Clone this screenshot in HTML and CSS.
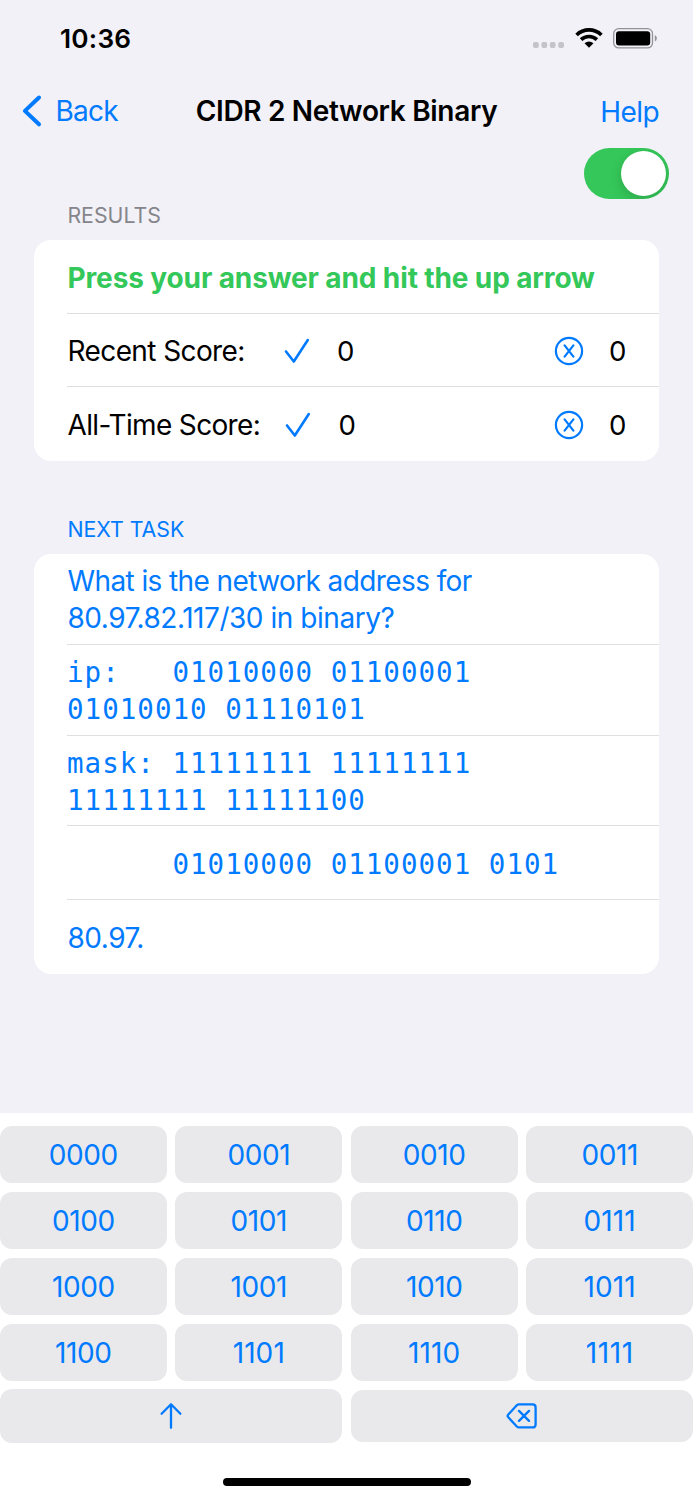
FILE: index.html
```html
<!DOCTYPE html>
<html lang="en">
<head>
<meta charset="utf-8">
<title>CIDR 2 Network Binary</title>
<link rel="stylesheet" href="styles.css">
</head>
<body>
<div class="screen">
  <div class="status">
    <span class="time">10:36</span>
    <div class="indicators">
      <svg class="dots" viewBox="0 0 32 6"><rect x="0" width="5.8" height="6" rx="2"/><rect x="8.4" width="5.8" height="6" rx="2"/><rect x="16.8" width="5.8" height="6" rx="2"/><rect x="25.2" width="5.8" height="6" rx="2"/></svg>
      <svg class="wifi" viewBox="0 0 28 20"><path d="M1.6 7A17.8 17.8 0 0 1 26.4 7M6.1 11.7A11.4 11.4 0 0 1 21.9 11.7" fill="none" stroke="#000" stroke-width="3.7"/><path d="M9.5 15.2Q14 11.6 18.5 15.2L14 19.8Z"/></svg>
      <svg class="battery" viewBox="0 0 45 21"><rect x=".7" y=".7" width="38.8" height="19.2" rx="5" fill="none" stroke="#939397" stroke-width="1.3"/><rect x="3" y="3.2" width="34.2" height="14.2" rx="3"/><path d="M41.8 7Q43.8 8 43.8 10.2T41.8 13.5Z" fill="#939397"/></svg>
    </div>
  </div>
  <header class="nav">
    <a class="back"><svg class="chevron" viewBox="0 0 20 34"><path d="M17 3.5L2.9 16.9L17 30.3"/></svg><span>Back</span></a>
    <h1>CIDR 2 Network Binary</h1>
    <a class="help">Help</a>
  </header>
  <div class="switch-row"><div class="switch"><div class="knob"></div></div></div>
  <h2 class="section results">RESULTS</h2>
  <section class="card">
    <div class="row prompt">Press your answer and hit the up arrow</div>
    <div class="row score">
      <span class="label recent">Recent Score:</span>
      <svg class="check" viewBox="0 0 26 26"><path d="M2 13.5L9.8 23.5L23.8 2"/></svg>
      <span class="count">0</span>
      <svg class="cross" viewBox="0 0 30 30"><circle cx="15" cy="15" r="13.1"/><path d="M10.6 9.4L19.4 20.6M19.4 9.4L10.6 20.6"/></svg>
      <span class="count">0</span>
    </div>
    <div class="row score">
      <span class="label all-time">All-Time Score:</span>
      <svg class="check" viewBox="0 0 26 26"><path d="M2 13.5L9.8 23.5L23.8 2"/></svg>
      <span class="count">0</span>
      <svg class="cross" viewBox="0 0 30 30"><circle cx="15" cy="15" r="13.1"/><path d="M10.6 9.4L19.4 20.6M19.4 9.4L10.6 20.6"/></svg>
      <span class="count">0</span>
    </div>
  </section>
  <h2 class="section next">NEXT TASK</h2>
  <section class="card task">
    <div class="row two question"><span>What is the network address for</span><span class="cidr">80.97.82.117/30 in binary?</span></div>
    <div class="row two mono"><span>ip:   01010000 01100001</span><span>01010010 01110101</span></div>
    <div class="row two mono"><span>mask: 11111111 11111111</span><span>11111111 11111100</span></div>
    <div class="row mono"><span>      01010000 01100001 0101</span></div>
    <div class="row answer"><span>80.97.</span></div>
  </section>
  <div class="keyboard">
    <div class="keys">
      <button>0000</button><button>0001</button><button>0010</button><button>0011</button>
      <button>0100</button><button>0101</button><button>0110</button><button class="wide">0111</button>
      <button>1000</button><button>1001</button><button>1010</button><button class="wide">1011</button>
      <button>1100</button><button class="wide">1101</button><button class="wide">1110</button><button class="wider">1111</button>
    </div>
    <div class="actions">
      <button class="submit" aria-label="Submit"><svg viewBox="0 0 24 28"><path d="M12 25.8V2.3M2.6 11.8L12 2.2L21.4 11.8"/></svg></button>
      <button class="delete" aria-label="Delete"><svg viewBox="0 0 32 28"><path d="M12.8 2.4H26.6Q29.6 2.4 29.6 5.4V22.4Q29.6 25.4 26.6 25.4H12.8Q11.8 25.4 10.8 24.5L2.3 15.3Q1 13.9 2.3 12.5L10.8 3.3Q11.8 2.4 12.8 2.4ZM13 8.9L23 18.9M23 8.9L13 18.9"/></svg></button>
    </div>
    <div class="home"></div>
  </div>
</div>
</body>
</html>
```
FILE: styles.css
```css
* { box-sizing: border-box; }
body { margin: 0; background: #f2f1f7; font-family: Inter, "Liberation Sans", sans-serif; font-size: 28px; color: #000; }
.screen { height: 1500px; width: 693px; display: flex; flex-direction: column; overflow: hidden; }
svg { display: block; flex: none; }
span { white-space: pre; }
.status { height: 76px; padding: 0 35px 0 60px; display: flex; align-items: center; justify-content: space-between; }
.time { font-size: 26.2px; font-weight: 600; letter-spacing: .25px; }
.indicators { display: flex; align-items: center; }
.dots { width: 32px; height: 6px; fill: #c3c3c8; margin: 14px 9.7px 0 0; }
.wifi { width: 28px; height: 20px; margin-right: 10.2px; }
.battery { width: 45px; height: 21px; }
.nav { height: 70px; padding: 0 34px 0 21.5px; display: grid; grid-template-columns: 1fr auto 1fr; align-items: center; color: #007aff; }
.nav h1 { margin: 0 0 0 12.5px; font-size: 28px; font-weight: 600; letter-spacing: -.32px; color: #000; }
.back { display: flex; align-items: center; gap: 14px; letter-spacing: -.75px; margin-right: -12px; }
.chevron { width: 20px; height: 34px; fill: none; stroke: #007aff; stroke-width: 4; stroke-linecap: round; stroke-linejoin: round; }
.help { text-align: right; letter-spacing: -.6px; padding-top: 1px; }
.switch-row { display: flex; justify-content: flex-end; padding: 1.7px 24px 0 0; height: 54px; }
.switch { width: 85px; height: 51.5px; border-radius: 26px; background: #35c759; padding: 3px; display: flex; justify-content: flex-end; overflow: hidden; }
.knob { width: 45.3px; height: 45.3px; border-radius: 50%; background: #fff; box-shadow: 0 4px 12px rgba(0,0,0,.16); }
.section { margin: 0; padding-left: 67.4px; font-size: 21.3px; font-weight: 400; line-height: 26px; }
.results { color: #85858b; height: 40px; padding-top: 2px; }
.next { color: #007aff; height: 93px; padding-top: 55px; }
.card { margin: 0 34px; background: #fff; border-radius: 17px; padding-left: 33px; }
.row { height: 73.6px; display: flex; align-items: center; padding: 2px 32.5px 0 .5px; border-bottom: 1px solid #dfdfe1; }
.row:last-child { border-bottom: 0; }
.prompt { color: #34c759; font-weight: 700; letter-spacing: -.12px; padding-top: 3px; }
.label { width: 216px; }
.recent { letter-spacing: -.6px; }
.all-time { width: 217.5px; letter-spacing: -.66px; }
.check { width: 26px; height: 26px; margin-right: 27.5px; fill: none; stroke: #007aff; stroke-width: 2.6; stroke-linecap: round; stroke-linejoin: round; }
.cross { width: 30px; height: 30px; margin: 0 25px 0 auto; fill: none; stroke: #007aff; stroke-width: 2.2; stroke-linecap: round; }
.count { font-size: 27.6px; padding-top: 1px; }
.task { color: #007aff; }
.two { height: 90.9px; flex-direction: column; align-items: flex-start; justify-content: center; line-height: 37px; }
.question { letter-spacing: -.6px; }
.cidr { letter-spacing: -.46px; }
.answer { letter-spacing: -.5px; }
.mono { font-family: "DejaVu Sans Mono", monospace; font-size: 27.5px; letter-spacing: 1.02px; padding-left: 0; }
.keyboard { margin-top: auto; height: 387px; background: #fff; padding-top: 13px; }
button { border: 0; padding: 0; background: #e9e9eb; border-radius: 12px; color: #007aff; font: inherit; letter-spacing: -.4px; display: flex; align-items: center; justify-content: center; }
.keys { display: grid; grid-template-columns: repeat(4, 1fr); gap: 8.9px 8.8px; }
.keys button { height: 57px; padding-top: 1.5px; }
.keys .wide { letter-spacing: .1px; }
.keys .wider { letter-spacing: .6px; }
.actions { display: grid; grid-template-columns: 1fr 1fr; gap: 8.6px; margin-top: 8.1px; align-items: center; }
.actions svg { fill: none; stroke: #007aff; stroke-width: 2.3; stroke-linecap: round; stroke-linejoin: round; }
.submit { height: 54px; }
.delete { height: 52px; }
.submit svg { width: 24px; height: 28px; }
.delete svg { width: 32px; height: 28px; }
.home { width: 248px; height: 8px; border-radius: 4px; background: #000; margin: 35px auto 0; }
```
